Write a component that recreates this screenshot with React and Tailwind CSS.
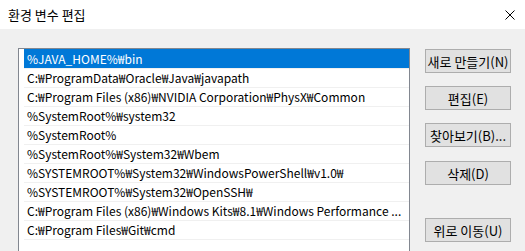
import React from "react";

const rows = [
  "%JAVA_HOME%₩bin",
  "C:₩ProgramData₩Oracle₩Java₩javapath",
  "C:₩Program Files (x86)₩NVIDIA Corporation₩PhysX₩Common",
  "%SystemRoot%₩system32",
  "%SystemRoot%",
  "%SystemRoot%₩System32₩Wbem",
  "%SYSTEMROOT%₩System32₩WindowsPowerShell₩v1.0₩",
  "%SYSTEMROOT%₩System32₩OpenSSH₩",
  "C:₩Program Files (x86)₩Windows Kits₩8.1₩Windows Performance ...",
  "C:₩Program Files₩Git₩cmd",
  "",
];

function Btn({ children, className = "" }) {
  return (
    <div
      className={
        "h-[24px] w-[86px] border border-[#adadad] bg-[#e1e1e1] flex items-center justify-center text-[13px] text-black leading-none " +
        className
      }
    >
      {children}
    </div>
  );
}

export default function App() {
  return (
    <div className="w-[525px] h-[251px] overflow-hidden bg-[#f0f0f0] flex flex-col font-['Noto_Sans_CJK_KR',sans-serif]">
      <div className="h-[29px] bg-white flex items-center justify-between pl-[8px] pr-[10px] shrink-0">
        <span className="text-[13px] text-black leading-none">환경 변수 편집</span>
        <svg width="10" height="10" viewBox="0 0 10 10">
          <path d="M0.5 0.5 L9.5 9.5 M9.5 0.5 L0.5 9.5" stroke="#000" strokeWidth="1" />
        </svg>
      </div>
      <div className="flex pt-[19px] pl-[18px] flex-1">
        <div className="w-[392px] h-[260px] border border-[#828790] bg-white pl-[5px] shrink-0">
          {rows.map((r, i) => (
            <div
              key={i}
              className={
                "h-[19px] flex items-center pl-[3px] text-[12px] whitespace-nowrap overflow-hidden leading-none " +
                (i === 0
                  ? "bg-[#0078d7] text-white"
                  : "border-t border-[#f0f0f0] text-black")
              }
            >
              {r}
            </div>
          ))}
        </div>
        <div className="flex flex-col ml-[15px] mt-[1px]">
          <Btn>새로 만들기(N)</Btn>
          <Btn className="mt-[13px]">편집(E)</Btn>
          <Btn className="mt-[13px]">찾아보기(B)...</Btn>
          <Btn className="mt-[14px]">삭제(D)</Btn>
          <Btn className="mt-[33px]">위로 이동(U)</Btn>
        </div>
      </div>
    </div>
  );
}
